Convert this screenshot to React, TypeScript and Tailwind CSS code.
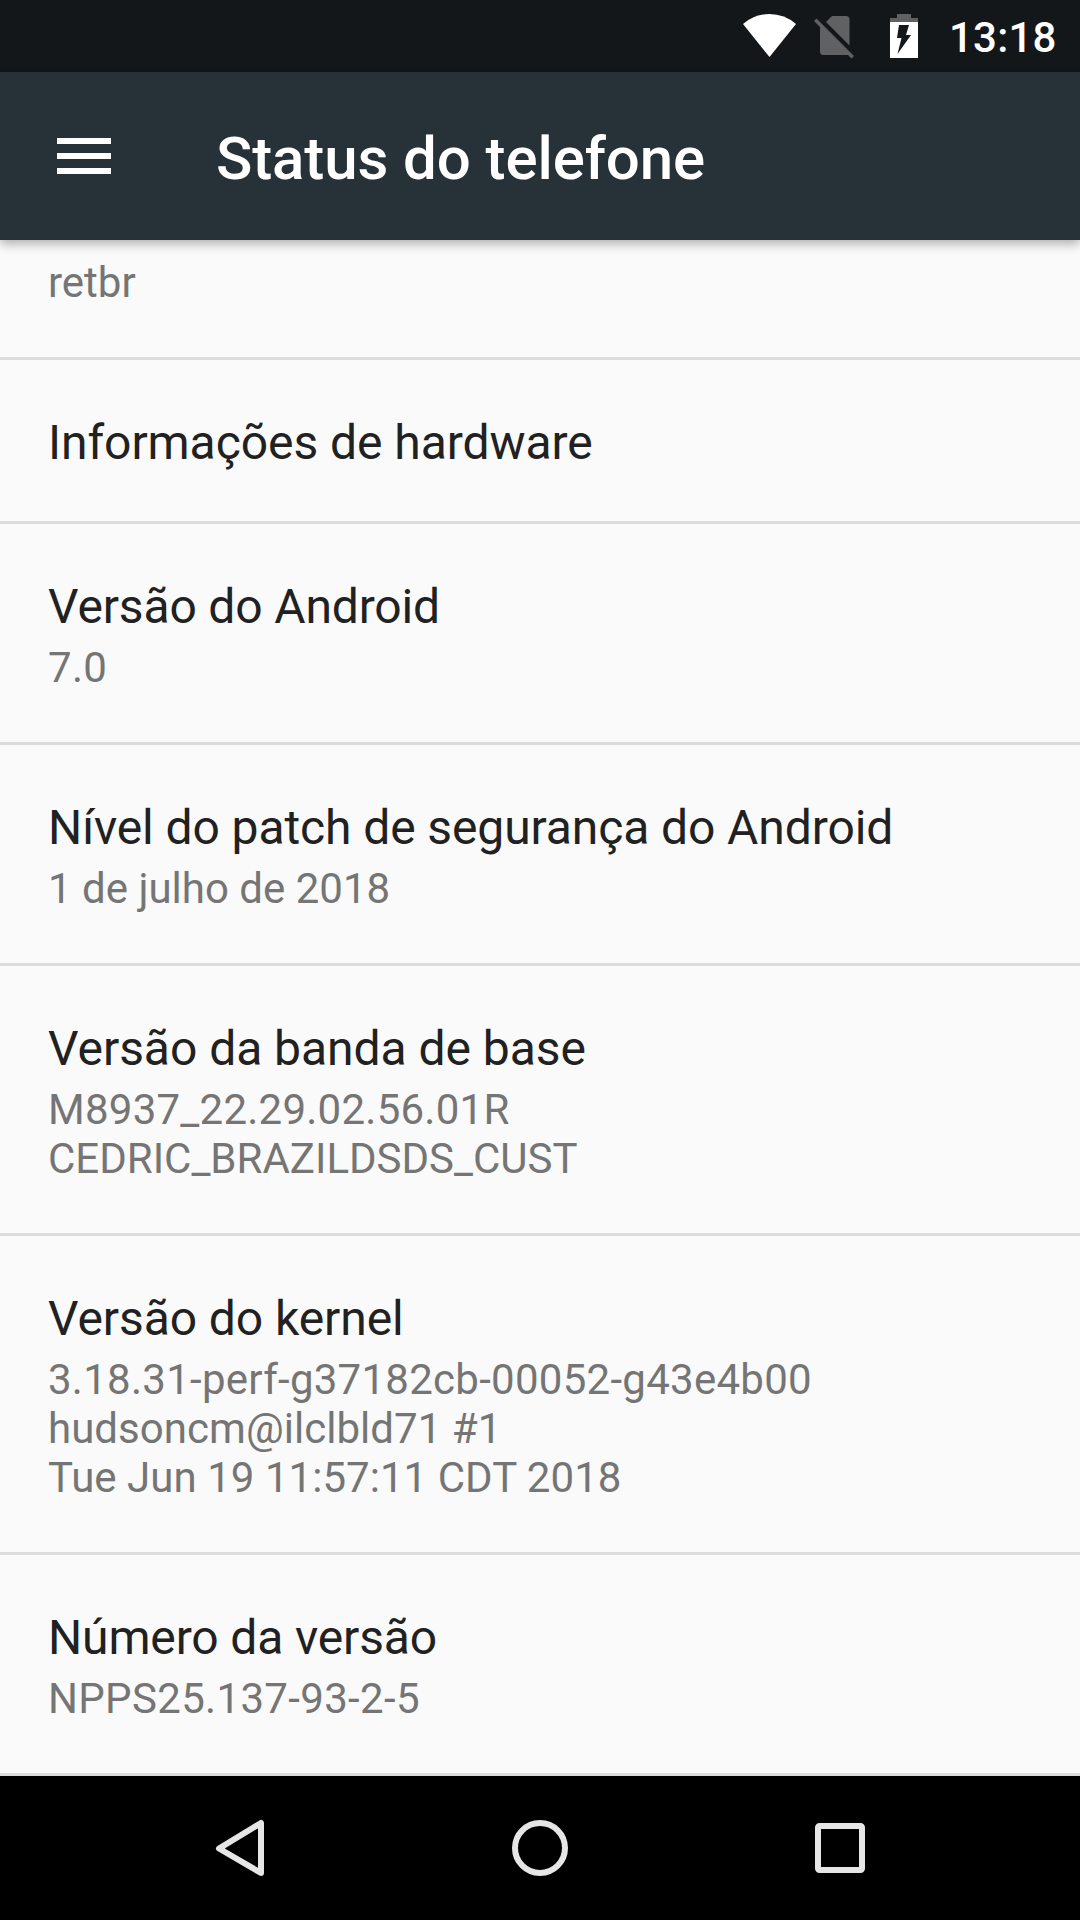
import type { ReactNode } from "react";

type Line = { text: string; tracking?: string };
type Item = { title: string; tracking: string; lines?: Line[]; box: string };

const ITEMS: Item[] = [
  { title: "Informações de hardware", tracking: "tracking-[-0.06px]", box: "h-[164px]" },
  { title: "Versão do Android", tracking: "tracking-[-0.15px]", lines: [{ text: "7.0", tracking: "tracking-[0.3px]" }], box: "h-[221px]" },
  { title: "Nível do patch de segurança do Android", tracking: "tracking-[-0.1px]", lines: [{ text: "1 de julho de 2018" }], box: "h-[221px]" },
  {
    title: "Versão da banda de base",
    tracking: "tracking-[-0.04px]",
    lines: [{ text: "M8937_22.29.02.56.01R", tracking: "tracking-[0.25px]" }, { text: "CEDRIC_BRAZILDSDS_CUST" }],
    box: "h-[270px]",
  },
  {
    title: "Versão do kernel",
    tracking: "tracking-[-0.08px]",
    lines: [
      { text: "3.18.31-perf-g37182cb-00052-g43e4b00", tracking: "tracking-[0.27px]" },
      { text: "hudsoncm@ilclbld71 #1", tracking: "tracking-[0.04px]" },
      { text: "Tue Jun 19 11:57:11 CDT 2018", tracking: "tracking-[0.04px]" },
    ],
    box: "h-[319px]",
  },
  { title: "Número da versão", tracking: "tracking-[-0.15px]", lines: [{ text: "NPPS25.137-93-2-5", tracking: "tracking-[0.33px]" }], box: "h-[221px]" },
];

function StatusBar() {
  return (
    <div className="flex h-[72px] shrink-0 items-center justify-end bg-[#13171a] pr-[24px] text-white">
      {/* Wi-Fi */}
      <svg className="mr-[18px] h-[72px] w-[54px] shrink-0" viewBox="742 0 54 72">
        <path d="M769.5 57 L743 24 Q754.5 14 769.5 14 Q784.5 14 796 24 Z" fill="#fff" />
      </svg>
      {/* Sem chip */}
      <svg className="mr-[34px] h-[72px] w-[40px] shrink-0" viewBox="814 0 40 72" fill="#5f6163">
        <path d="M826 22 L832 16 H846 Q849.5 16 849.5 19.5 V45.5 Z" />
        <path d="M816.5 18.5 L854 56 L851.5 58.5 L848 55 H823.5 Q820 55 820 51.5 V27 L814 21 Z" />
      </svg>
      {/* Bateria carregando */}
      <svg className="mr-[31px] h-[72px] w-[30px] shrink-0" viewBox="888 0 30 72">
        <path d="M897 14 H911 V18 H918 V22 H890 V18 H897 Z" fill="#5f6163" />
        <path d="M890 22 H918 V58 H890 Z" fill="#fff" />
        <path d="M899 25 H909 L906 35 H911 L897.5 54 L901.5 38 H897 Z" fill="#13171a" />
      </svg>
      <span className="w-[107px] shrink-0 pt-[4px] text-[42px] leading-none font-medium tracking-[0.2px] whitespace-nowrap">13:18</span>
    </div>
  );
}

function TopBar({ children }: { children: ReactNode }) {
  return (
    <header className="z-10 flex h-[168px] shrink-0 items-center bg-[#263238] pl-[57px] shadow-[0_4px_10px_rgba(0,0,0,0.3)]">
      <svg className="h-[36px] w-[54px]" viewBox="0 0 54 36" fill="#fff">
        <path d="M0 0H54V6H0ZM0 15H54V21H0ZM0 30H54V36H0Z" />
      </svg>
      <h1 className="ml-[105px] pt-[6px] text-[60px] leading-none font-medium tracking-[-0.1px] text-white">{children}</h1>
    </header>
  );
}

function Row({ title, tracking, lines, box }: Item) {
  return (
    <div className={`${box} shrink-0 border-b-3 border-[#dcdcdc] pl-[48px]`}>
      <h2 className={`mb-[6px] pt-[53px] text-[48px] leading-[60px] text-[#212121] ${tracking}`}>{title}</h2>
      {lines?.map((line) => (
        <p key={line.text} className={`text-[42px] leading-[49px] text-[#757575] ${line.tracking ?? ""}`}>{line.text}</p>
      ))}
    </div>
  );
}

export default function App() {
  return (
    <div className="flex h-[1920px] w-[1080px] flex-col overflow-hidden bg-[#fafafa] font-['Roboto',sans-serif]">
      <StatusBar />
      <TopBar>Status do telefone</TopBar>
      <main className="flex min-h-0 flex-1 flex-col overflow-hidden">
        <div className="h-[120px] shrink-0 border-b-3 border-[#dcdcdc] pt-[18px] pl-[48px] text-[42px] leading-[49px] text-[#757575]">retbr</div>
        {ITEMS.map((item) => (
          <Row key={item.title} {...item} />
        ))}
      </main>
      <nav className="flex h-[144px] shrink-0 items-center bg-black">
        <svg className="h-[144px] w-full" viewBox="0 0 1080 144" fill="none" stroke="#e6e6e6" strokeWidth="6">
          <path d="M261 47 V97 L219 72.5 Z" strokeLinejoin="round" />
          <circle cx="540" cy="72" r="25" />
          <rect x="818" y="50" width="44" height="44" rx="1.5" />
        </svg>
      </nav>
    </div>
  );
}
